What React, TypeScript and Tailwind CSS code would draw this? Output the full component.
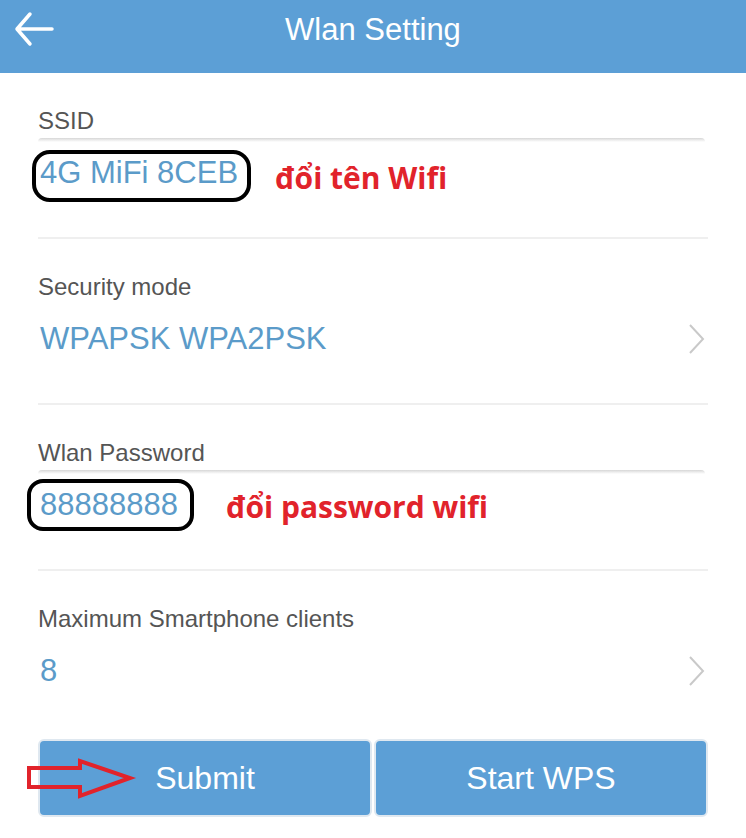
import React from "react";

const Chevron = () => (
  <svg width="18" height="32" viewBox="0 0 18 32" className="shrink-0">
    <path d="M2 2 L15 16 L2 30" fill="none" stroke="#c9c9c9" strokeWidth="2" />
  </svg>
);

function Section({
  label,
  children,
  input,
  chevron,
  divider = true,
}: {
  label: string;
  children: React.ReactNode;
  input?: boolean;
  chevron?: boolean;
  divider?: boolean;
}) {
  return (
    <div
      className={`mx-[38px] flex h-[166px] flex-col pt-[34px] ${
        divider ? "border-b-2 border-[#efefef]" : ""
      }`}
    >
      <div className="h-[28px] text-[24px] leading-[28px] text-[#555555]">{label}</div>
      <div
        className={`mt-[3px] mr-[3px] h-[4px] rounded-t-[6px] ${
          input ? "bg-gradient-to-b from-[#d6d6d6] via-[#ececec] to-transparent" : ""
        }`}
      />
      <div className="flex h-[62px] items-center justify-between pr-[2px]">
        <div className="flex items-center">{children}</div>
        {chevron && <Chevron />}
      </div>
    </div>
  );
}

export default function App() {
  return (
    <div
      className="relative h-[838px] w-[746px] overflow-hidden bg-white"
      style={{ fontFamily: '"Liberation Sans", Arial, sans-serif' }}
    >
      {/* Header */}
      <div className="relative flex h-[73px] justify-center bg-[#5c9fd6] pt-[11px]">
        <svg
          width="44"
          height="40"
          viewBox="0 0 44 40"
          className="absolute left-[12px] top-[10px]"
        >
          <path
            d="M5 19 L40 19 M18 4 L5 19 L18 34"
            fill="none"
            stroke="white"
            strokeWidth="3.5"
            strokeLinecap="round"
            strokeLinejoin="round"
          />
        </svg>
        <div className="text-[31px] leading-[38px] text-white">Wlan Setting</div>
      </div>

      <Section label="SSID" input>
        <span className="relative ml-[2px] text-[31px] leading-[34px] text-[#5b9bc9]">
          4G MiFi 8CEB
          <span className="absolute -left-[8px] -right-[13px] -top-[6px] -bottom-[12px] rounded-[18px] border-4 border-black" />
        </span>
        <span
          className="relative top-[5px] ml-[37px] text-[30px] font-bold leading-[34px] text-[#e1232b]"
          style={{ fontFamily: '"Open Sans", "Noto Sans", sans-serif' }}
        >
          đổi tên Wifi
        </span>
      </Section>

      <Section label="Security mode" chevron>
        <span className="ml-[2px] text-[31px] leading-[34px] text-[#5b9bc9]">
          WPAPSK WPA2PSK
        </span>
      </Section>

      <Section label="Wlan Password" input>
        <span className="relative ml-[2px] text-[31px] leading-[34px] text-[#5b9bc9]">
          88888888
          <span className="absolute -left-[13px] -right-[16px] -top-[9px] -bottom-[9px] rounded-[16px] border-4 border-black" />
        </span>
        <span
          className="relative top-[2px] ml-[48px] text-[30px] font-bold leading-[34px] text-[#e1232b]"
          style={{ fontFamily: '"Open Sans", "Noto Sans", sans-serif' }}
        >
          đổi password wifi
        </span>
      </Section>

      <Section label="Maximum Smartphone clients" chevron divider={false}>
        <span className="ml-[2px] text-[31px] leading-[34px] text-[#5b9bc9]">8</span>
      </Section>

      {/* Buttons */}
      <div className="relative ml-[38px] mt-[2px] flex w-[670px] gap-[2px]">
        <button className="flex h-[78px] flex-1 items-center justify-center rounded-[6px] border-2 border-[#dfe8f0] bg-[#5c9fd6] text-[32px] text-white">
          Submit
        </button>
        <button className="flex h-[78px] flex-1 items-center justify-center rounded-[6px] border-2 border-[#dfe8f0] bg-[#5c9fd6] text-[32px] text-white">
          Start WPS
        </button>
        <svg
          width="120"
          height="50"
          viewBox="0 0 120 50"
          className="absolute -left-[12px] top-[19px]"
        >
          <path
            d="M3 10 L54 10 L54 3 L104 20 L54 38 L54 29 L3 29 Z"
            fill="none"
            stroke="#e1232b"
            strokeWidth="4"
            strokeLinejoin="miter"
          />
        </svg>
      </div>
    </div>
  );
}
